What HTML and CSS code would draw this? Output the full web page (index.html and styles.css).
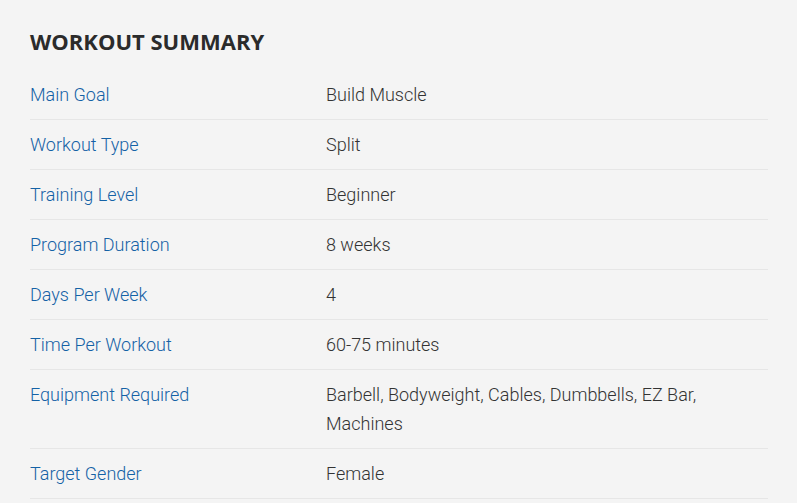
FILE: index.html
```html
<!DOCTYPE html>
<html lang="en">
<head>
<meta charset="utf-8">
<title>Workout Summary</title>
<link rel="stylesheet" href="styles.css">
</head>
<body>
<section class="summary">
  <h2 class="summary-title">WORKOUT SUMMARY</h2>
  <div class="summary-table">
    <div class="row"><div class="label">Main Goal</div><div class="value">Build Muscle</div></div>
    <div class="row"><div class="label">Workout Type</div><div class="value">Split</div></div>
    <div class="row"><div class="label">Training Level</div><div class="value">Beginner</div></div>
    <div class="row"><div class="label">Program Duration</div><div class="value">8 weeks</div></div>
    <div class="row"><div class="label">Days Per Week</div><div class="value">4</div></div>
    <div class="row"><div class="label">Time Per Workout</div><div class="value">60-75 minutes</div></div>
    <div class="row"><div class="label">Equipment Required</div><div class="value">Barbell, Bodyweight, Cables, Dumbbells, EZ Bar, Machines</div></div>
    <div class="row"><div class="label">Target Gender</div><div class="value">Female</div></div>
  </div>
</section>
</body>
</html>
```

FILE: styles.css
```css
html, body {
  margin: 0;
  padding: 0;
  background: #f4f4f4;
}
.summary {
  padding: 26px 29px 0 30px;
}
.summary-title {
  margin: 0 0 14px 0;
  font-family: "Open Sans", sans-serif;
  font-weight: 700;
  font-size: 22px;
  line-height: 30px;
  color: #2b2b2b;
}
.summary-table {
  display: flex;
  flex-direction: column;
}
.row {
  display: grid;
  grid-template-columns: 296px 1fr;
  padding: 10px 0;
  border-bottom: 1px solid #e6e6e6;
  font-family: Roboto, sans-serif;
  font-weight: 300;
  font-size: 18px;
  line-height: 29px;
}
.label {
  color: #1462a6;
}
.value {
  color: #333333;
  padding-right: 60px;
}
```
